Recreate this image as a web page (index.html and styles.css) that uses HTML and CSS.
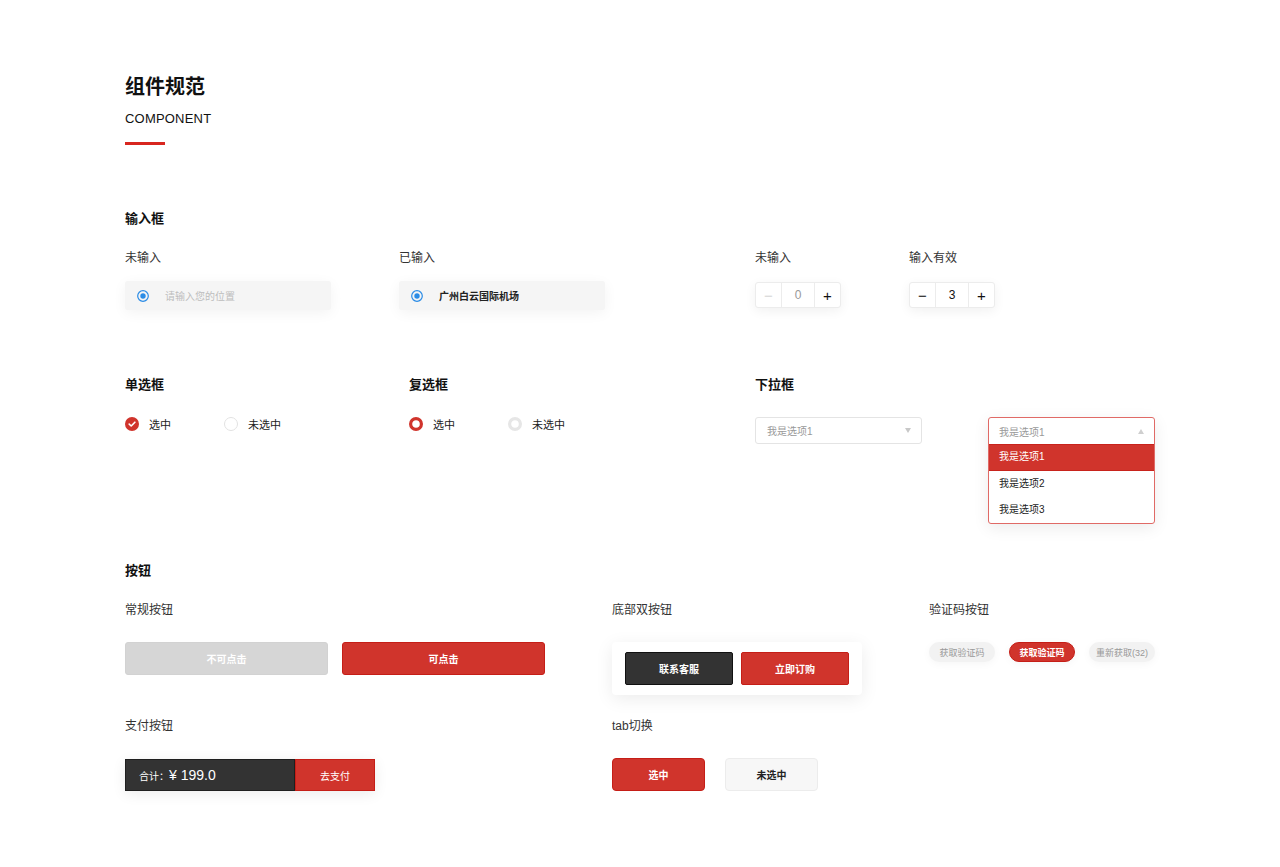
FILE: index.html
```html
<!DOCTYPE html>
<html lang="zh-CN">
<head>
<meta charset="utf-8">
<title>组件规范</title>
<link rel="stylesheet" href="styles.css">
</head>
<body>
<div class="page">
  <header class="head">
    <h1 class="title">组件规范</h1>
    <div class="subtitle">COMPONENT</div>
    <div class="bar"></div>
  </header>

  <section class="sec sec-input">
    <h2 class="sec-title">输入框</h2>
    <div class="row row-input">
      <div class="col c1">
        <div class="label">未输入</div>
        <div class="field">
          <svg class="loc" width="12" height="12" viewBox="0 0 12 12"><circle cx="6" cy="6" r="5.3" fill="none" stroke="#2b8ce6" stroke-width="1.2"/><circle cx="6" cy="6" r="2.7" fill="#2b8ce6"/></svg>
          <span class="ph">请输入您的位置</span>
        </div>
      </div>
      <div class="col c2">
        <div class="label">已输入</div>
        <div class="field">
          <svg class="loc" width="12" height="12" viewBox="0 0 12 12"><circle cx="6" cy="6" r="5.3" fill="none" stroke="#2b8ce6" stroke-width="1.2"/><circle cx="6" cy="6" r="2.7" fill="#2b8ce6"/></svg>
          <span class="val">广州白云国际机场</span>
        </div>
      </div>
      <div class="col c3">
        <div class="label">未输入</div>
        <div class="stepper">
          <span class="st-btn dis">−</span><span class="st-num dis">0</span><span class="st-btn">+</span>
        </div>
      </div>
      <div class="col c4">
        <div class="label">输入有效</div>
        <div class="stepper">
          <span class="st-btn">−</span><span class="st-num">3</span><span class="st-btn">+</span>
        </div>
      </div>
    </div>
  </section>

  <section class="sec sec-choice">
    <div class="row row-choice">
      <div class="col d1">
        <h2 class="sec-title">单选框</h2>
        <div class="opts">
          <div class="opt">
            <svg width="14" height="14" viewBox="0 0 14 14"><circle cx="7" cy="7" r="7" fill="#d0342c"/><path d="M4.2 7.1 L6.2 9 L9.9 5.2" fill="none" stroke="#fff" stroke-width="1.6" stroke-linecap="round" stroke-linejoin="round"/></svg>
            <span>选中</span>
          </div>
          <div class="opt">
            <svg width="14" height="14" viewBox="0 0 14 14"><circle cx="7" cy="7" r="6.5" fill="#fff" stroke="#e2e2e2" stroke-width="1"/></svg>
            <span>未选中</span>
          </div>
        </div>
      </div>
      <div class="col d2">
        <h2 class="sec-title">复选框</h2>
        <div class="opts">
          <div class="opt">
            <svg width="14" height="14" viewBox="0 0 14 14"><circle cx="7" cy="7" r="5.4" fill="#fff" stroke="#d0342c" stroke-width="3.2"/></svg>
            <span>选中</span>
          </div>
          <div class="opt">
            <svg width="14" height="14" viewBox="0 0 14 14"><circle cx="7" cy="7" r="5.4" fill="#fff" stroke="#e6e6e6" stroke-width="3.2"/></svg>
            <span>未选中</span>
          </div>
        </div>
      </div>
      <div class="col d3">
        <h2 class="sec-title">下拉框</h2>
        <div class="select">
          <span>我是选项1</span>
          <span class="tri down"></span>
        </div>
      </div>
      <div class="col d4">
        <div class="sec-title blank"></div>
        <div class="select open">
          <div class="sel-head"><span>我是选项1</span><span class="tri up"></span></div>
          <div class="sel-item active">我是选项1</div>
          <div class="sel-item">我是选项2</div>
          <div class="sel-item">我是选项3</div>
        </div>
      </div>
    </div>
  </section>

  <section class="sec sec-btn">
    <h2 class="sec-title">按钮</h2>
    <div class="btn-grid">
      <div class="g1">
        <div class="label">常规按钮</div>
        <div class="btn-row">
          <button class="btn gray">不可点击</button>
          <button class="btn red">可点击</button>
        </div>
      </div>
      <div class="g2">
        <div class="label">底部双按钮</div>
        <div class="dual">
          <button class="dbtn dark">联系客服</button>
          <button class="dbtn red">立即订购</button>
        </div>
      </div>
      <div class="g3">
        <div class="label">验证码按钮</div>
        <div class="codes">
          <span class="pill">获取验证码</span>
          <span class="pill on">获取验证码</span>
          <span class="pill">重新获取(32)</span>
        </div>
      </div>
      <div class="g4">
        <div class="label">支付按钮</div>
        <div class="pay">
          <div class="pay-sum"><span class="pay-lbl">合计：</span><span class="pay-amt">¥ 199.0</span></div>
          <div class="pay-go">去支付</div>
        </div>
      </div>
      <div class="g5">
        <div class="label">tab切换</div>
        <div class="tabs">
          <span class="tab on">选中</span>
          <span class="tab">未选中</span>
        </div>
      </div>
    </div>
  </section>
</div>
</body>
</html>
```

FILE: styles.css
```css
* { box-sizing: border-box; }
html, body { margin: 0; padding: 0; background: #fff; }
body {
  font-family: "Liberation Sans", "Noto Sans CJK SC", sans-serif;
  color: #222;
  width: 1280px;
  height: 867px;
  overflow: hidden;
}
.page { padding: 75px 0 0 125px; }

.title { margin: 0; font-size: 20px; line-height: 24px; font-weight: 700; color: #111; }
.subtitle { margin-top: 12px; font-size: 13px; line-height: 16px; color: #111; letter-spacing: 0.2px; }
.bar { margin-top: 15px; width: 40px; height: 3px; background: #d8261f; }

.sec-title { margin: 0; font-size: 13px; line-height: 18px; font-weight: 700; color: #111; }
.sec-title.blank { height: 18px; }
.label { font-size: 12px; line-height: 16px; color: #333; }

.row { display: flex; }

/* input section */
.sec-input { margin-top: 65px; }
.row-input { margin-top: 22px; }
.c1 { width: 274px; }
.c2 { width: 356px; }
.c3 { width: 154px; }
.c4 { width: 120px; }
.field {
  margin-top: 15px;
  width: 206px; height: 29px;
  background: #f5f5f5;
  border-radius: 3px;
  display: flex; align-items: center;
  padding-left: 12px;
  box-shadow: 0 3px 14px rgba(0,0,0,0.05);
}
.loc { flex: none; margin-right: 16px; }
.ph { font-size: 10px; color: #bdbdbd; }
.val { font-size: 10px; font-weight: 700; color: #222; }

.stepper {
  margin-top: 16px;
  width: 86px; height: 26px;
  display: flex;
  border: 1px solid #ececec;
  border-radius: 3px;
  background: #fff;
  box-shadow: 0 3px 12px rgba(0,0,0,0.06);
}
.st-btn, .st-num {
  display: flex; align-items: center; justify-content: center;
  font-size: 14px; color: #111;
}
.st-btn { width: 25px; font-size: 15px; }
.st-num { width: 34px; font-size: 12px; border-left: 1px solid #ececec; border-right: 1px solid #ececec; }
.st-btn.dis { color: #d6d6d6; }
.st-num.dis { color: #999; }

/* choice section */
.sec-choice { margin-top: 66px; }
.d1 { width: 284px; }
.d2 { width: 346px; }
.d3 { width: 233px; }
.d4 { width: 170px; }
.opts { display: flex; margin-top: 23px; }
.opt { width: 99px; display: flex; align-items: center; height: 14px; font-size: 11px; color: #222; }
.opt svg { flex: none; margin-right: 10px; }

.select {
  margin-top: 23px;
  width: 167px; height: 27px;
  border: 1px solid #e4e4e4;
  border-radius: 3px;
  display: flex; align-items: center; justify-content: space-between;
  padding: 0 10px 0 11px;
  font-size: 10px; color: #999;
  background: #fff;
}
.tri { width: 0; height: 0; border-left: 3.5px solid transparent; border-right: 3.5px solid transparent; }
.tri.down { border-top: 5px solid #c8c8c8; }
.tri.up { border-bottom: 5px solid #cfcfcf; }

.select.open {
  height: 107px;
  display: block;
  padding: 0;
  border-color: #e06a66;
  overflow: hidden;
  box-shadow: 0 4px 16px rgba(0,0,0,0.08);
}
.sel-head {
  height: 26px;
  display: flex; align-items: center; justify-content: space-between;
  padding: 0 10px 0 10px;
  color: #999;
}
.sel-item { height: 26.5px; line-height: 26.5px; padding-left: 10px; color: #222; font-size: 10px; }
.sel-item.active { background: #d0342c; color: #fff; border-top: 1px solid #c8231c; border-bottom: 1px solid #c8231c; line-height: 24.5px; }

/* buttons section */
.sec-btn { margin-top: 38px; }
.btn-grid {
  margin-top: 22px;
  display: grid;
  grid-template-columns: 487px 317px 240px;
  grid-template-rows: 94px auto;
  row-gap: 22px;
}
.g4 { grid-column: 1; grid-row: 2; }
.g5 { grid-column: 2; grid-row: 2; }

button { font-family: inherit; padding: 0; margin: 0; cursor: pointer; }
.btn-row { margin-top: 24px; display: flex; gap: 14px; }
.btn {
  width: 203px; height: 33px;
  border-radius: 3px;
  font-size: 10px; font-weight: 700; color: #fff;
  border: 1px solid transparent;
}
.btn.gray { background: #d6d6d6; border-color: #d2d2d2; }
.btn.red { background: #d0342c; border-color: #c51e17; }

.dual {
  margin-top: 24px;
  width: 250px; height: 53px;
  background: #fff;
  border-radius: 4px;
  box-shadow: 0 4px 18px rgba(0,0,0,0.08);
  display: flex; gap: 8px;
  padding: 10px 13px;
}
.dbtn {
  width: 108px; height: 33px;
  border-radius: 2px;
  font-size: 10px; font-weight: 700; color: #fff;
}
.dbtn.dark { background: #333; border: 1px solid #111; }
.dbtn.red { background: #d0342c; border: 1px solid #c51e17; }

.codes { margin-top: 24px; display: flex; gap: 14px; }
.pill {
  width: 66px; height: 20px;
  border-radius: 10px;
  background: #f2f2f2;
  display: flex; align-items: center; justify-content: center;
  font-size: 9px; color: #999;
  white-space: nowrap;
  box-shadow: 0 2px 8px rgba(0,0,0,0.04);
}
.pill.on { background: #d0342c; color: #fff; font-weight: 700; border: 1px solid #c51e17; }

.pay {
  margin-top: 25px;
  width: 250px; height: 32px;
  display: flex;
  box-shadow: 0 3px 14px rgba(0,0,0,0.08);
}
.pay-sum {
  width: 170px;
  background: #333;
  border: 1px solid #1f1f1f;
  display: flex; align-items: center;
  padding-left: 13px;
  color: #fff;
}
.pay-lbl { font-size: 10px; }
.pay-amt { font-size: 14px; }
.pay-go {
  width: 80px;
  background: #d0342c;
  border: 1px solid #c51e17;
  display: flex; align-items: center; justify-content: center;
  font-size: 10px; color: #fff;
}

.tabs { margin-top: 24px; display: flex; gap: 20px; }
.tab {
  width: 93px; height: 33px;
  border-radius: 4px;
  display: flex; align-items: center; justify-content: center;
  font-size: 10px; font-weight: 700; color: #222;
  background: #f7f7f7;
  border: 1px solid #ececec;
}
.tab.on { background: #d0342c; color: #fff; border-color: #c51e17; }
```
